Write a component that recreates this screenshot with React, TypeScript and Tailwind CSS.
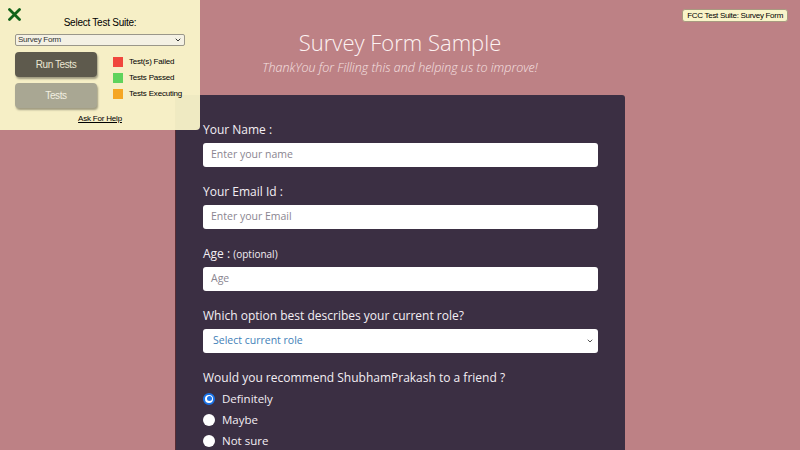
import { ChevronDown } from 'lucide-react';

const legend = [
  { label: 'Test(s) Failed', color: 'bg-[#f0473d]' },
  { label: 'Tests Passed', color: 'bg-[#5fd35c]' },
  { label: 'Tests Executing', color: 'bg-[#f5a623]' },
];

const fields = [
  { label: 'Your Name :', placeholder: 'Enter your name' },
  { label: 'Your Email Id :', placeholder: 'Enter your Email' },
];

function TestPanel() {
  return (
    <div className="absolute left-0 top-0 w-[200px] h-[130px] bg-[#f9f4c9]/95 rounded-br-[4px] font-['Liberation_Sans',sans-serif] text-black">
      <svg className="absolute left-[8px] top-[8px] w-[13px] h-[13px]" viewBox="0 0 13 13">
        <path d="M1.5 1.5 L11.5 11.5 M11.5 1.5 L1.5 11.5" stroke="#11631a" strokeWidth={2.8} strokeLinecap="round" />
      </svg>
      <p className="pt-[17px] text-center text-[10px] leading-[12px] tracking-[-0.25px]">Select Test Suite:</p>
      <div className="mx-[15px] mt-[5px] h-[12px] flex items-center justify-between border border-[#9a978a] bg-[#f4f1e4] rounded-[2px] px-[2px]">
        <span className="text-[8px] leading-[10px] tracking-[-0.25px] text-[#333]">Survey Form</span>
        <ChevronDown className="w-[8px] h-[8px] text-[#333]" strokeWidth={3} />
      </div>
      <div className="flex mt-[6px] pl-[15px]">
        <div className="flex flex-col gap-[6px]">
          <div className="w-[82px] h-[25px] rounded-[4px] bg-[#5e5a4d] shadow-[1px_2px_2px_rgba(0,0,0,0.35)] flex items-center justify-center text-[10px] tracking-[-0.4px] text-[#ece6d2]">
            Run Tests
          </div>
          <div className="w-[82px] h-[25px] rounded-[4px] bg-[#a9a793] shadow-[1px_2px_2px_rgba(0,0,0,0.35)] flex items-center justify-center text-[10px] tracking-[-0.4px] text-[#f2efe0]">
            Tests
          </div>
        </div>
        <div className="ml-[16px] mt-[5px] flex flex-col gap-[6px]">
          {legend.map((l) => (
            <div key={l.label} className="flex items-center gap-[6px]">
              <span className={`w-[10px] h-[10px] ${l.color}`} />
              <span className="text-[8px] leading-[10px] tracking-[-0.2px]">{l.label}</span>
            </div>
          ))}
        </div>
      </div>
      <p className="mt-[5px] text-center text-[8px] leading-[11px] tracking-[-0.2px] underline">Ask For Help</p>
    </div>
  );
}

export default function App() {
  return (
    <div className="relative w-[800px] h-[450px] overflow-hidden bg-[#bd8185] font-['Open_Sans',sans-serif]">
      <TestPanel />
      <div className="absolute right-[12px] top-[9px] px-[4px] h-[13px] flex items-center bg-[#f9f4c9] border border-[#a89a80] rounded-[3px] font-['Liberation_Sans',sans-serif] text-[8px] tracking-[-0.3px] text-black">
        FCC Test Suite: Survey Form
      </div>

      {/* Header */}
      <header className="pt-[27px] text-center">
        <h1 className="text-[22px] leading-[31px] font-light text-[#fdf3f3]">Survey Form Sample</h1>
        <p className="mt-[2px] text-[12.5px] leading-[16px] italic font-light text-[#f6e2e3]">
          ThankYou for Filling this and helping us to improve!
        </p>
      </header>

      {/* Form card */}
      <main className="mx-auto mt-[19px] w-[450px] bg-[#3b2f43] rounded-t-[3px] border-l border-[#5a2d33] px-[27px] pt-[25px] text-[#f3eef3]">
        {fields.map((f) => (
          <div key={f.label} className="mb-[15px]">
            <label className="block text-[12px] leading-[20px]">{f.label}</label>
            <div className="mt-[3px] h-[24px] rounded-[3px] bg-white flex items-center px-[8px] text-[10.5px] text-[#8a8590]">
              {f.placeholder}
            </div>
          </div>
        ))}
        <div className="mb-[15px]">
          <label className="block h-[20px] text-[12px] leading-[20px]">
            Age : <span className="text-[10px]">(optional)</span>
          </label>
          <div className="mt-[3px] h-[24px] rounded-[3px] bg-white flex items-center px-[8px] text-[10.5px] text-[#8a8590]">
            Age
          </div>
        </div>
        <div className="mb-[15px]">
          <label className="block text-[12px] leading-[20px]">Which option best describes your current role?</label>
          <div className="mt-[3px] h-[24px] rounded-[3px] bg-white flex items-center justify-between pl-[10px] pr-[4px] text-[10.5px] text-[#3f7fb8]">
            Select current role
            <ChevronDown className="w-[8px] h-[8px] text-[#555]" strokeWidth={3} />
          </div>
        </div>
        <div>
          <p className="text-[12px] leading-[20px]">Would you recommend ShubhamPrakash to a friend ?</p>
          <div className="flex flex-col">
            {['Definitely', 'Maybe', 'Not sure'].map((o, i) => (
              <div key={o} className="h-[21px] flex items-center gap-[7px]">
                {i === 0 ? (
                  <span className="w-[12px] h-[12px] rounded-full border-2 border-[#1a73e8] bg-white flex items-center justify-center">
                    <span className="w-[5px] h-[5px] rounded-full bg-[#1a73e8]" />
                  </span>
                ) : (
                  <span className="w-[12px] h-[12px] rounded-full bg-white" />
                )}
                <span className="text-[11.5px]">{o}</span>
              </div>
            ))}
          </div>
        </div>
      </main>
    </div>
  );
}
